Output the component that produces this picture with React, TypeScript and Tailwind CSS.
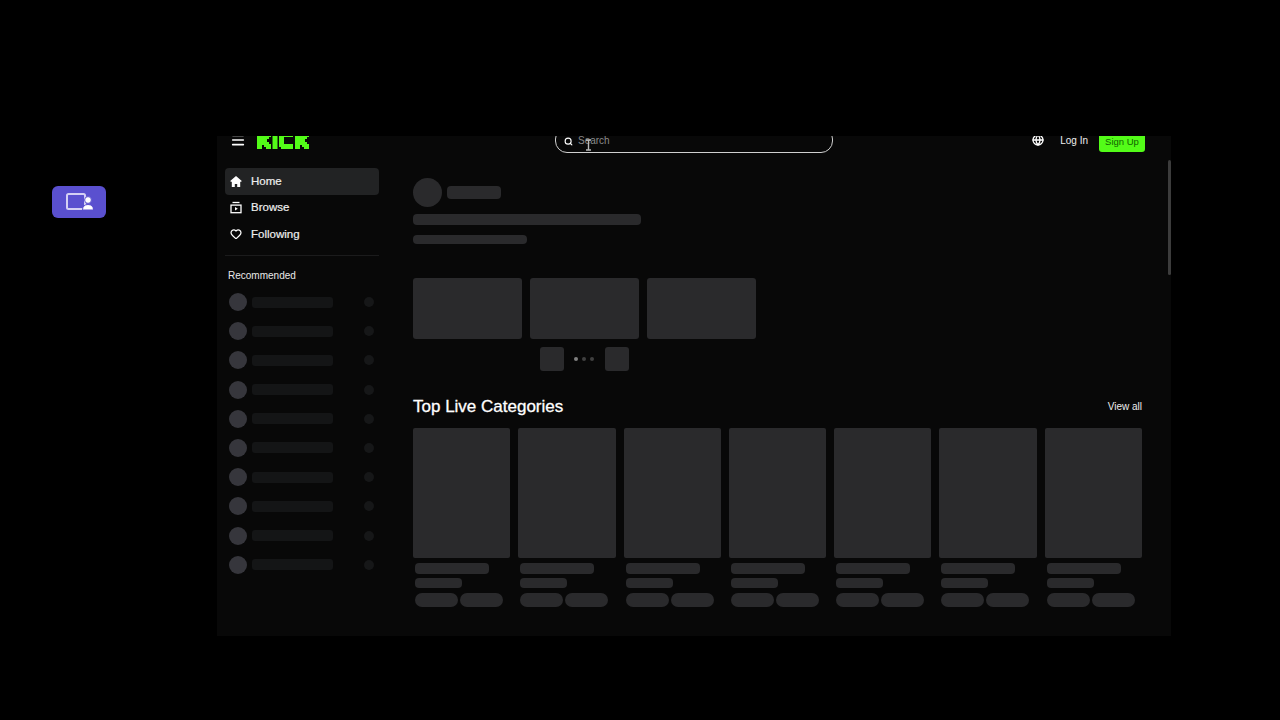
import { Globe, Heart, Menu, Search } from "lucide-react";

const sidebarRows = [0, 1, 2, 3, 4, 5, 6, 7, 8, 9];
const categories = [0, 1, 2, 3, 4, 5, 6];

const KickLogo = () => (
  <svg viewBox="0 0 53 17" className="h-[17px] w-[53px] shrink-0 fill-[#53fc18]">
    <polygon points="0,0 5,0 5,4 7,4 7,2 9,2 9,0 14,0 14,5 12,5 12,7 10,7 10,10 12,10 12,12 14,12 14,17 9,17 9,15 7,15 7,13 5,13 5,17 0,17" />
    <rect x="15.5" y="0" width="5" height="17" />
    <polygon points="24,0 36,0 36,5 27,5 27,12 36,12 36,17 24,17 24,15 22,15 22,2 24,2" />
    <polygon points="38,0 43,0 43,4 45,4 45,2 47,2 47,0 52,0 52,5 50,5 50,7 48,7 48,10 50,10 50,12 52,12 52,17 47,17 47,15 45,15 45,13 43,13 43,17 38,17" />
  </svg>
);

const HomeIcon = () => (
  <svg viewBox="0 0 12 12" className="h-[13px] w-[13px] fill-white">
    <path d="M6 .4.2 5.6l.9 1 .7-.6v5.400h3V8.400h2.400v3h3V6l.7.6.9-1z" />
  </svg>
);

const BrowseIcon = () => (
  <svg viewBox="0 0 12 12" className="h-[13px] w-[13px] fill-none stroke-white stroke-[1.3]">
    <path d="M2.500 1h7" />
    <rect x="1" y="3.600" width="10" height="7.600" />
    <path d="M5 5.500v3.600l2.800-1.800z" className="fill-white stroke-0" />
  </svg>
);

const RoomIcon = () => (
  <svg viewBox="0 0 28 20" className="h-5 w-7">
    <rect x="2" y="2" width="18" height="15" rx="1.500" className="fill-none stroke-[#d4d0f4] stroke-2" />
    <path d="M17.500 18c0-3.500 2-5.500 5.500-5.500s5.500 2 5.500 5.500z" className="fill-white stroke-[#5a50cf]" />
    <circle cx="23" cy="8" r="3.400" className="fill-white stroke-[#5a50cf]" />
  </svg>
);

const NavItem = ({ label, icon, active }: { label: string; icon: React.ReactNode; active?: boolean }) => (
  <div className={`flex h-[26.5px] items-center gap-[9px] rounded pl-[5px] text-[11.500px] font-medium text-[#eeeeee] [-webkit-text-stroke:0.2px_#eeeeee] ${active ? "bg-[#222324]" : ""}`}>
    <span className="flex w-3 justify-center">{icon}</span>
    {label}
  </div>
);

export default function App() {
  return (
    <div className="flex h-[720px] w-[1280px] overflow-hidden bg-black pt-[136px] [font-family:'Liberation_Sans',Arial,sans-serif]">
      <div className="w-[217px] shrink-0 pl-[52px] pt-[50px]">
        <div className="flex h-8 w-[54px] items-center justify-center rounded-md bg-[#5a50cf]">
          <RoomIcon />
        </div>
      </div>

      <div className="relative h-[500px] w-[954px] shrink-0 overflow-hidden bg-[#080808]">
        <header className="relative -mt-[9px] flex h-[26px] items-center pl-[13px] pr-[26px]">
          <Menu size={16} strokeWidth={2.4} className="text-white" />
          <div className="ml-[11px]">
            <KickLogo />
          </div>
          <div className="ml-[245px] flex h-[26px] w-[278px] items-center gap-[5px] rounded-xl border border-[#cfcfcf] pl-2 pt-[2px] text-[10px] leading-3 text-[#8a8a8a]">
            <Search size={9} strokeWidth={3} className="text-white" />
            Search
          </div>
          <Globe size={12} strokeWidth={2.6} className="ml-auto text-white" />
          <span className="ml-[16px] pt-px text-[10px] font-medium text-[#eeeeee]">Log In</span>
          <div className="ml-[11px] flex h-[23px] w-[46px] items-center justify-center rounded-[3px] bg-[#53fc18] pt-[3px] text-[9.500px] leading-3 text-[#0f6100]">
            Sign Up
          </div>
        </header>

        <div className="flex">
          <aside className="ml-2 w-[154px] shrink-0 pt-[15px]">
            <NavItem label="Home" icon={<HomeIcon />} active />
            <NavItem label="Browse" icon={<BrowseIcon />} />
            <NavItem label="Following" icon={<Heart size={12} strokeWidth={2.5} className="text-white" />} />
            <div className="mt-[7.500px] h-px bg-[#1b1b1c]" />
            <p className="ml-[3px] mt-[14px] text-[10px] leading-3 text-[#e8e8e8]">Recommended</p>
            <div className="mt-[11px] flex flex-col gap-[11.200px]">
              {sidebarRows.map((row) => (
                <div key={row} className="flex h-[18px] items-center pl-1">
                  <div className="h-[18px] w-[18px] rounded-full bg-[#36363c]" />
                  <div className="ml-[5px] h-[11px] w-[81px] rounded-[3px] bg-[#141516]" />
                  <div className="ml-[31px] h-2.5 w-2.5 rounded-full bg-[#161718]" />
                </div>
              ))}
            </div>
          </aside>

          <main className="ml-[34px] w-[729px] shrink-0 pt-[25px]">
            <div className="flex items-center gap-[5px]">
              <div className="h-[29px] w-[29px] rounded-full bg-[#2a2a2c]" />
              <div className="h-[13px] w-[54px] rounded bg-[#2a2a2c]" />
            </div>
            <div className="mt-[7px] h-[11px] w-[228px] rounded bg-[#2a2a2c]" />
            <div className="mt-2.5 h-[9px] w-[114px] rounded bg-[#2a2a2c]" />

            <div className="mt-[34px] flex gap-2">
              <div className="h-[61px] w-[109px] rounded-[3px] bg-[#2a2a2c]" />
              <div className="h-[61px] w-[109px] rounded-[3px] bg-[#2a2a2c]" />
              <div className="h-[61px] w-[109px] rounded-[3px] bg-[#2a2a2c]" />
            </div>

            <div className="ml-[127px] mt-2 flex items-center">
              <div className="h-6 w-6 rounded-[3px] bg-[#2a2a2c]" />
              <div className="ml-[10px] flex gap-1">
                <div className="h-1 w-1 rounded-full bg-[#808080]" />
                <div className="h-1 w-1 rounded-full bg-[#404040]" />
                <div className="h-1 w-1 rounded-full bg-[#404040]" />
              </div>
              <div className="ml-[11px] h-6 w-6 rounded-[3px] bg-[#2a2a2c]" />
            </div>

            <div className="mt-[23px] flex h-6 items-center justify-between">
              <h2 className="pt-px text-[17px] font-medium text-white [-webkit-text-stroke:0.3px_white]">Top Live Categories</h2>
              <span className="text-[10px] font-medium text-[#eeeeee]">View all</span>
            </div>

            <div className="mt-2.5 grid grid-cols-7 gap-2">
              {categories.map((category) => (
                <div key={category}>
                  <div className="h-[130px] rounded-[2px] bg-[#2a2a2c]" />
                  <div className="ml-0.5 mt-[5px] h-[11px] w-[74px] rounded bg-[#2a2a2c]" />
                  <div className="ml-0.5 mt-1 h-2.5 w-[47px] rounded bg-[#2a2a2c]" />
                  <div className="ml-0.5 mt-[5px] flex gap-0.5">
                    <div className="h-3.5 w-[43px] rounded-full bg-[#2a2a2c]" />
                    <div className="h-3.5 w-[43px] rounded-full bg-[#2a2a2c]" />
                  </div>
                </div>
              ))}
            </div>
          </main>
        </div>

        {/* page scrollbar */}
        <div className="absolute right-0 top-6 h-[115px] w-[3px] rounded-full bg-[#3c3c3c]" />
        {/* text cursor over the search box */}
        <svg viewBox="0 0 7 12" className="absolute left-[368px] top-[3px] h-3 w-[7px] fill-none stroke-[#bbbbbb] stroke-[1.4]">
          <path d="M1 1h5M3.500 1v10M1 11h5" />
        </svg>
      </div>
    </div>
  );
}
